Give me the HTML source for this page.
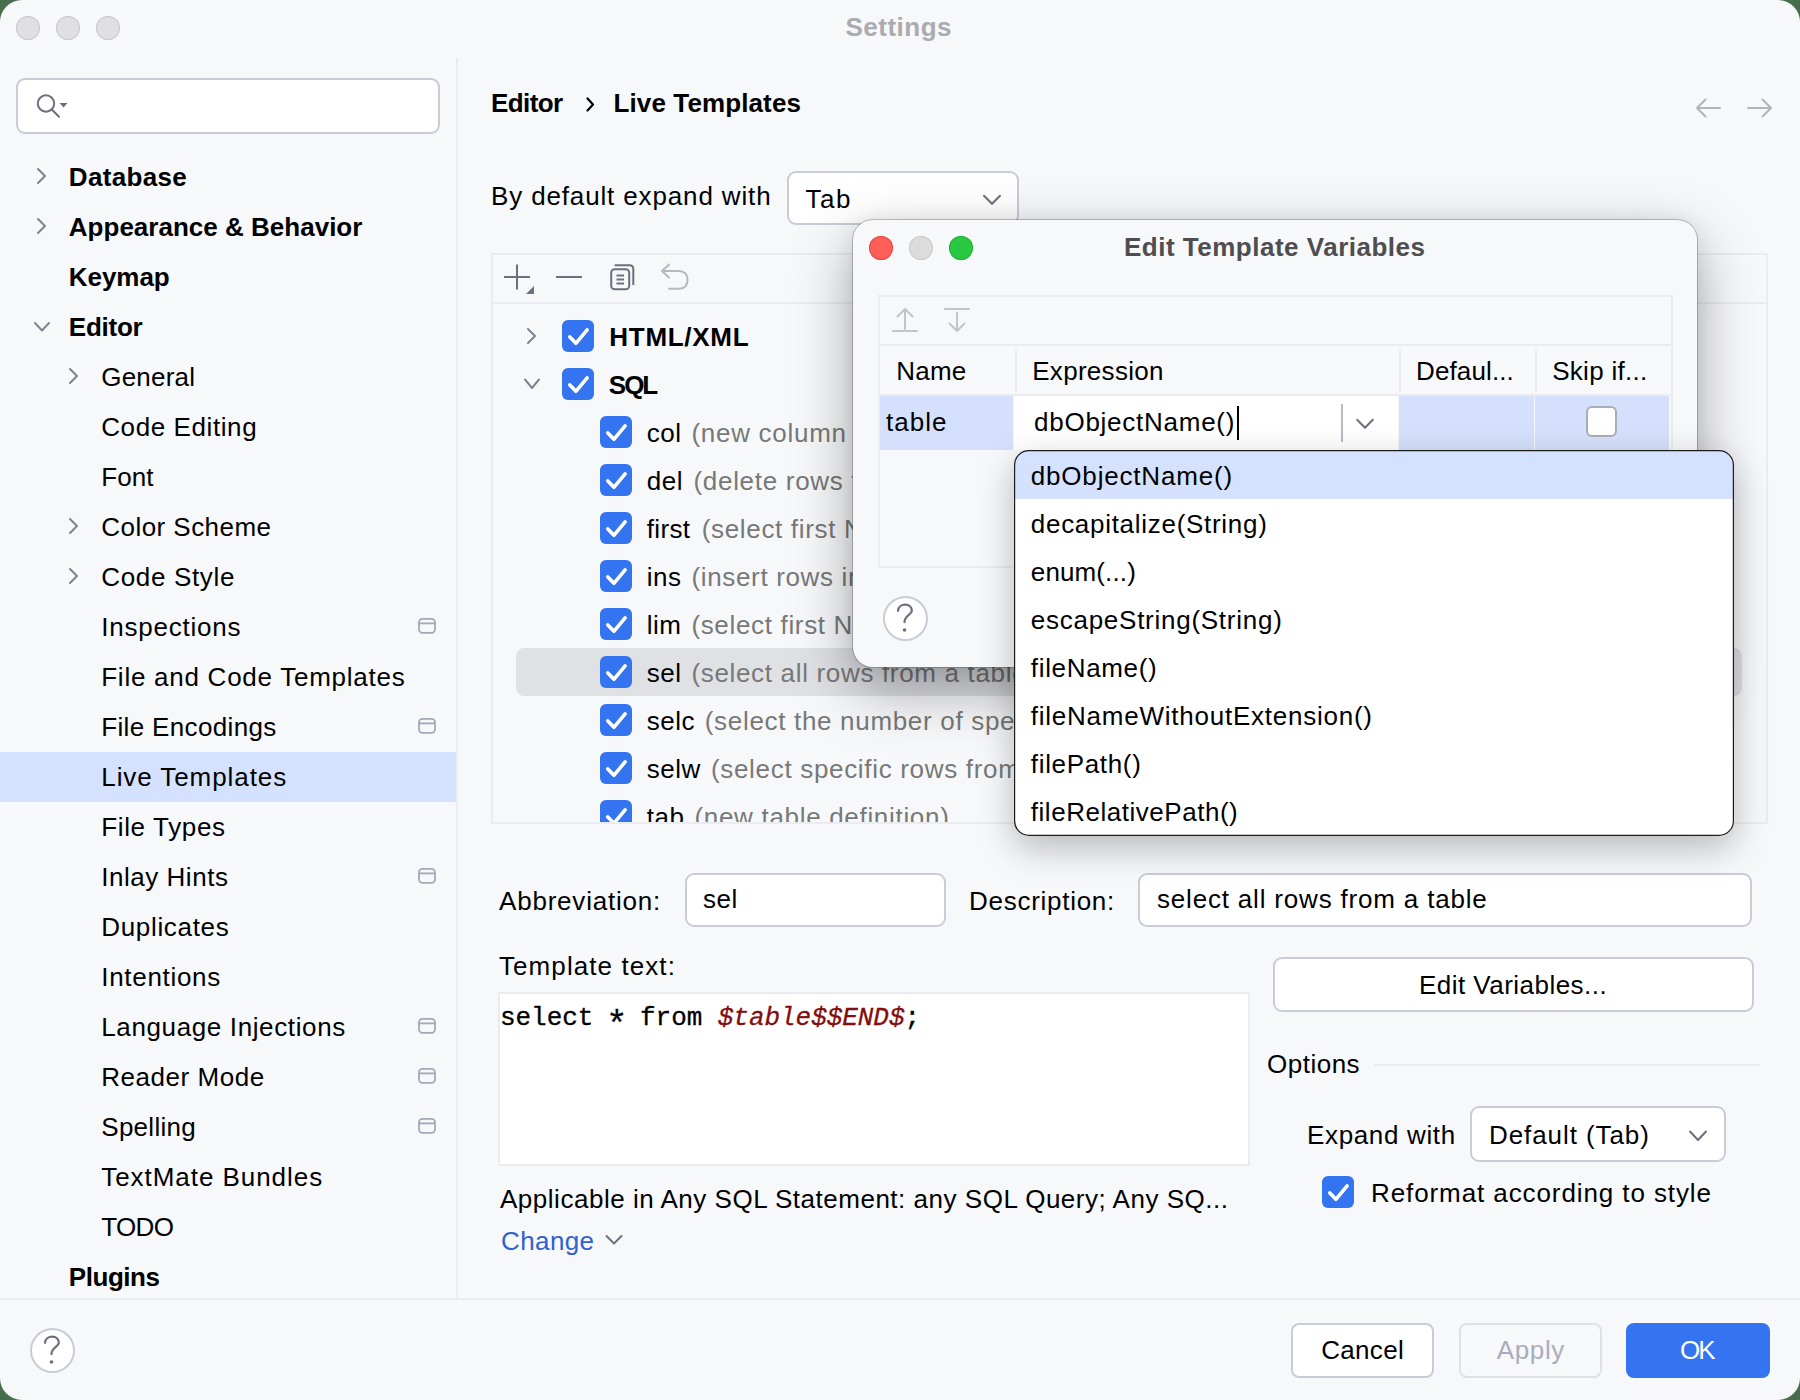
<!DOCTYPE html>
<html><head><meta charset="utf-8"><title>Settings</title>
<style>
html,body{margin:0;padding:0;}
body{width:1800px;height:1400px;background:#476e4c;overflow:hidden;position:relative;font-family:"Liberation Sans",sans-serif;}
#win{position:absolute;left:0;top:0;width:1800px;height:1400px;background:#f7f8fa;border-radius:22px;overflow:hidden;}
.t{position:absolute;white-space:nowrap;line-height:1;}
.b{position:absolute;}
svg.b{overflow:visible;}
#dlg{background:#f7f8fa;border-radius:20px;box-shadow:0 0 0 1px rgba(0,0,0,0.22),0 22px 60px rgba(0,0,0,0.34),0 0 20px rgba(0,0,0,0.07);}
#pop{background:#fff;border-radius:15px;overflow:hidden;box-shadow:0 12px 36px rgba(0,0,0,0.26);}
#popb{border-radius:15px;box-shadow:inset 0 0 0 1.2px #1c1c1c;}
</style></head><body>
<div id="win">
<div class="b" style="left:16px;top:16px;width:24px;height:24px;border-radius:50%;background:#e0e0e2;box-shadow:inset 0 0 0 1px #c8c8ca;"></div>
<div class="b" style="left:56px;top:16px;width:24px;height:24px;border-radius:50%;background:#e0e0e2;box-shadow:inset 0 0 0 1px #c8c8ca;"></div>
<div class="b" style="left:96px;top:16px;width:24px;height:24px;border-radius:50%;background:#e0e0e2;box-shadow:inset 0 0 0 1px #c8c8ca;"></div>
<div class="t" style="left:845.50px;top:13.99px;font-size:26px;font-weight:700;font-style:normal;font-family:'Liberation Sans', sans-serif;color:#aaabae;letter-spacing:0.500px;">Settings</div>
<div class="b" style="left:16px;top:78px;width:424px;height:56px;background:#fff;border:2px solid #c9ccd6;border-radius:9px;box-sizing:border-box;"></div>
<svg class="b" style="left:30px;top:90px;" width="50" height="32" viewBox="30 90 50 32"><circle cx="46" cy="103.5" r="8.2" fill="none" stroke="#6c707e" stroke-width="2"/><line x1="51.8" y1="109.5" x2="59" y2="116.8" stroke="#6c707e" stroke-width="2" stroke-linecap="round"/><path d="M59.5 103 L67.5 103 L63.5 107.5 Z" fill="#6c707e"/></svg>
<div class="b" style="left:456px;top:58px;width:2px;height:1240px;background:#ebecf0;"></div>
<div class="t" style="left:68.80px;top:163.99px;font-size:26px;font-weight:700;font-style:normal;font-family:'Liberation Sans', sans-serif;color:#000;letter-spacing:0.321px;">Database</div>
<svg class="b" style="left:33.8px;top:165px;" width="16.0" height="22" viewBox="33.8 165 16.0 22"><polyline points="37.8,169 44.8,176 37.8,183" fill="none" stroke="#7f8391" stroke-width="2" stroke-linecap="round" stroke-linejoin="round"/></svg>
<div class="t" style="left:68.80px;top:213.99px;font-size:26px;font-weight:700;font-style:normal;font-family:'Liberation Sans', sans-serif;color:#000;letter-spacing:0.013px;">Appearance &amp; Behavior</div>
<svg class="b" style="left:33.8px;top:215px;" width="16.0" height="22" viewBox="33.8 215 16.0 22"><polyline points="37.8,219 44.8,226 37.8,233" fill="none" stroke="#7f8391" stroke-width="2" stroke-linecap="round" stroke-linejoin="round"/></svg>
<div class="t" style="left:68.80px;top:263.99px;font-size:26px;font-weight:700;font-style:normal;font-family:'Liberation Sans', sans-serif;color:#000;letter-spacing:-0.050px;">Keymap</div>
<div class="t" style="left:68.80px;top:313.99px;font-size:26px;font-weight:700;font-style:normal;font-family:'Liberation Sans', sans-serif;color:#000;letter-spacing:-0.250px;">Editor</div>
<svg class="b" style="left:29.799999999999997px;top:317.5px;" width="24.0" height="18.0" viewBox="29.799999999999997 317.5 24.0 18.0"><polyline points="34.8,322.5 41.8,330.0 48.8,322.5" fill="none" stroke="#7f8391" stroke-width="2" stroke-linecap="round" stroke-linejoin="round"/></svg>
<div class="t" style="left:101.25px;top:363.99px;font-size:26px;font-weight:400;font-style:normal;font-family:'Liberation Sans', sans-serif;color:#000;letter-spacing:0.208px;">General</div>
<svg class="b" style="left:66.25px;top:365px;" width="16.0" height="22" viewBox="66.25 365 16.0 22"><polyline points="70.25,369 77.25,376 70.25,383" fill="none" stroke="#7f8391" stroke-width="2" stroke-linecap="round" stroke-linejoin="round"/></svg>
<div class="t" style="left:101.25px;top:413.99px;font-size:26px;font-weight:400;font-style:normal;font-family:'Liberation Sans', sans-serif;color:#000;letter-spacing:0.591px;">Code Editing</div>
<div class="t" style="left:101.25px;top:463.99px;font-size:26px;font-weight:400;font-style:normal;font-family:'Liberation Sans', sans-serif;color:#000;letter-spacing:0.083px;">Font</div>
<div class="t" style="left:101.25px;top:513.99px;font-size:26px;font-weight:400;font-style:normal;font-family:'Liberation Sans', sans-serif;color:#000;letter-spacing:0.455px;">Color Scheme</div>
<svg class="b" style="left:66.25px;top:515px;" width="16.0" height="22" viewBox="66.25 515 16.0 22"><polyline points="70.25,519 77.25,526 70.25,533" fill="none" stroke="#7f8391" stroke-width="2" stroke-linecap="round" stroke-linejoin="round"/></svg>
<div class="t" style="left:101.25px;top:563.99px;font-size:26px;font-weight:400;font-style:normal;font-family:'Liberation Sans', sans-serif;color:#000;letter-spacing:0.667px;">Code Style</div>
<svg class="b" style="left:66.25px;top:565px;" width="16.0" height="22" viewBox="66.25 565 16.0 22"><polyline points="70.25,569 77.25,576 70.25,583" fill="none" stroke="#7f8391" stroke-width="2" stroke-linecap="round" stroke-linejoin="round"/></svg>
<div class="t" style="left:101.25px;top:613.99px;font-size:26px;font-weight:400;font-style:normal;font-family:'Liberation Sans', sans-serif;color:#000;letter-spacing:0.775px;">Inspections</div>
<svg class="b" style="left:414px;top:614px;" width="26" height="24" viewBox="414 614 26 24"><rect x="419" y="618.8" width="16" height="14" rx="3.5" fill="none" stroke="#a3a8b8" stroke-width="1.8"/><line x1="419" y1="623.4" x2="435" y2="623.4" stroke="#a3a8b8" stroke-width="1.8"/></svg>
<div class="t" style="left:101.25px;top:663.99px;font-size:26px;font-weight:400;font-style:normal;font-family:'Liberation Sans', sans-serif;color:#000;letter-spacing:0.739px;">File and Code Templates</div>
<div class="t" style="left:101.25px;top:713.99px;font-size:26px;font-weight:400;font-style:normal;font-family:'Liberation Sans', sans-serif;color:#000;letter-spacing:0.346px;">File Encodings</div>
<svg class="b" style="left:414px;top:714px;" width="26" height="24" viewBox="414 714 26 24"><rect x="419" y="718.8" width="16" height="14" rx="3.5" fill="none" stroke="#a3a8b8" stroke-width="1.8"/><line x1="419" y1="723.4" x2="435" y2="723.4" stroke="#a3a8b8" stroke-width="1.8"/></svg>
<div class="b" style="left:0px;top:752px;width:456px;height:50px;background:#d4e2ff;"></div>
<div class="t" style="left:101.25px;top:763.99px;font-size:26px;font-weight:400;font-style:normal;font-family:'Liberation Sans', sans-serif;color:#000;letter-spacing:0.923px;">Live Templates</div>
<div class="t" style="left:101.25px;top:813.99px;font-size:26px;font-weight:400;font-style:normal;font-family:'Liberation Sans', sans-serif;color:#000;letter-spacing:0.639px;">File Types</div>
<div class="t" style="left:101.25px;top:863.99px;font-size:26px;font-weight:400;font-style:normal;font-family:'Liberation Sans', sans-serif;color:#000;letter-spacing:0.525px;">Inlay Hints</div>
<svg class="b" style="left:414px;top:864px;" width="26" height="24" viewBox="414 864 26 24"><rect x="419" y="868.8" width="16" height="14" rx="3.5" fill="none" stroke="#a3a8b8" stroke-width="1.8"/><line x1="419" y1="873.4" x2="435" y2="873.4" stroke="#a3a8b8" stroke-width="1.8"/></svg>
<div class="t" style="left:101.25px;top:913.99px;font-size:26px;font-weight:400;font-style:normal;font-family:'Liberation Sans', sans-serif;color:#000;letter-spacing:0.667px;">Duplicates</div>
<div class="t" style="left:101.25px;top:963.99px;font-size:26px;font-weight:400;font-style:normal;font-family:'Liberation Sans', sans-serif;color:#000;letter-spacing:0.694px;">Intentions</div>
<div class="t" style="left:101.25px;top:1013.99px;font-size:26px;font-weight:400;font-style:normal;font-family:'Liberation Sans', sans-serif;color:#000;letter-spacing:0.625px;">Language Injections</div>
<svg class="b" style="left:414px;top:1014px;" width="26" height="24" viewBox="414 1014 26 24"><rect x="419" y="1018.8" width="16" height="14" rx="3.5" fill="none" stroke="#a3a8b8" stroke-width="1.8"/><line x1="419" y1="1023.4" x2="435" y2="1023.4" stroke="#a3a8b8" stroke-width="1.8"/></svg>
<div class="t" style="left:101.25px;top:1063.99px;font-size:26px;font-weight:400;font-style:normal;font-family:'Liberation Sans', sans-serif;color:#000;letter-spacing:0.550px;">Reader Mode</div>
<svg class="b" style="left:414px;top:1064px;" width="26" height="24" viewBox="414 1064 26 24"><rect x="419" y="1068.8" width="16" height="14" rx="3.5" fill="none" stroke="#a3a8b8" stroke-width="1.8"/><line x1="419" y1="1073.4" x2="435" y2="1073.4" stroke="#a3a8b8" stroke-width="1.8"/></svg>
<div class="t" style="left:101.25px;top:1113.99px;font-size:26px;font-weight:400;font-style:normal;font-family:'Liberation Sans', sans-serif;color:#000;letter-spacing:0.286px;">Spelling</div>
<svg class="b" style="left:414px;top:1114px;" width="26" height="24" viewBox="414 1114 26 24"><rect x="419" y="1118.8" width="16" height="14" rx="3.5" fill="none" stroke="#a3a8b8" stroke-width="1.8"/><line x1="419" y1="1123.4" x2="435" y2="1123.4" stroke="#a3a8b8" stroke-width="1.8"/></svg>
<div class="t" style="left:101.25px;top:1163.99px;font-size:26px;font-weight:400;font-style:normal;font-family:'Liberation Sans', sans-serif;color:#000;letter-spacing:0.950px;">TextMate Bundles</div>
<div class="t" style="left:101.25px;top:1213.99px;font-size:26px;font-weight:400;font-style:normal;font-family:'Liberation Sans', sans-serif;color:#000;letter-spacing:-0.667px;">TODO</div>
<div class="t" style="left:68.80px;top:1263.99px;font-size:26px;font-weight:700;font-style:normal;font-family:'Liberation Sans', sans-serif;color:#000;letter-spacing:-0.450px;">Plugins</div>
<div class="b" style="left:0px;top:1298px;width:1800px;height:2px;background:#ebecf0;"></div>
<div class="b" style="left:29.5px;top:1327.5px;width:45.0px;height:45.0px;border-radius:50%;background:#fff;border:2px solid #c9ccd6;box-sizing:border-box;"></div>
<svg class="b" style="left:38px;top:1330px;" width="28" height="38" viewBox="38 1330 28 38"><path d="M45 1342.8 C45.5 1334.5 59.5 1334.5 58.8 1343 C58.2 1347 51.5 1347.5 51.5 1354.2" fill="none" stroke="#6c707e" stroke-width="2.2" stroke-linecap="round"/><circle cx="51.5" cy="1362" r="1.8" fill="#6c707e"/></svg>
<div class="b" style="left:1291px;top:1323px;width:143px;height:55px;background:#fff;border:2px solid #c9ccd6;border-radius:8px;box-sizing:border-box;"></div>
<div class="t" style="left:1321.25px;top:1337.49px;font-size:26px;font-weight:400;font-style:normal;font-family:'Liberation Sans', sans-serif;color:#000;letter-spacing:0.300px;">Cancel</div>
<div class="b" style="left:1459px;top:1323px;width:143px;height:55px;background:transparent;border:2px solid #dfe1e5;border-radius:8px;box-sizing:border-box;"></div>
<div class="t" style="left:1496.75px;top:1337.49px;font-size:26px;font-weight:400;font-style:normal;font-family:'Liberation Sans', sans-serif;color:#a8adbd;letter-spacing:0.625px;">Apply</div>
<div class="b" style="left:1626px;top:1323px;width:144px;height:55px;background:#3574f0;border-radius:8px;"></div>
<div class="t" style="left:1680.00px;top:1337.49px;font-size:26px;font-weight:400;font-style:normal;font-family:'Liberation Sans', sans-serif;color:#fff;letter-spacing:-2.000px;">OK</div>
<div class="t" style="left:491.00px;top:89.99px;font-size:26px;font-weight:700;font-style:normal;font-family:'Liberation Sans', sans-serif;color:#000;letter-spacing:-0.600px;">Editor</div>
<svg class="b" style="left:580px;top:92px;" width="20" height="24" viewBox="580 92 20 24"><polyline points="587.5,98.5 593,104.5 587.5,110.5" fill="none" stroke="#000" stroke-width="2.2" stroke-linecap="round" stroke-linejoin="round"/></svg>
<div class="t" style="left:613.50px;top:89.99px;font-size:26px;font-weight:700;font-style:normal;font-family:'Liberation Sans', sans-serif;color:#000;letter-spacing:0.115px;">Live Templates</div>
<svg class="b" style="left:1690px;top:94px;" width="36" height="28" viewBox="1690 94 36 28"><path d="M1720 108 L1697 108 M1705.5 99.5 L1697 108 L1705.5 116.5" fill="none" stroke="#b5b5b7" stroke-width="2" stroke-linecap="round" stroke-linejoin="round"/></svg>
<svg class="b" style="left:1742px;top:94px;" width="36" height="28" viewBox="1742 94 36 28"><path d="M1748 108 L1771 108 M1762.5 99.5 L1771 108 L1762.5 116.5" fill="none" stroke="#b5b5b7" stroke-width="2" stroke-linecap="round" stroke-linejoin="round"/></svg>
<div class="t" style="left:491.00px;top:183.49px;font-size:26px;font-weight:400;font-style:normal;font-family:'Liberation Sans', sans-serif;color:#000;letter-spacing:0.857px;">By default expand with</div>
<div class="b" style="left:787px;top:171px;width:232px;height:54px;background:#fff;border:2px solid #c9ccd6;border-radius:9px;box-sizing:border-box;"></div>
<div class="t" style="left:805.50px;top:185.69px;font-size:26px;font-weight:400;font-style:normal;font-family:'Liberation Sans', sans-serif;color:#000;letter-spacing:1.500px;">Tab</div>
<svg class="b" style="left:980px;top:191px;" width="24" height="18" viewBox="980 191 24 18"><polyline points="984,195.7 992,203.8 1000,195.7" fill="none" stroke="#6c707e" stroke-width="2" stroke-linecap="round" stroke-linejoin="round"/></svg>
<div class="b" style="left:491px;top:253px;width:1277px;height:571px;border:2px solid #ebecf0;box-sizing:border-box;"></div>
<div class="b" style="left:493px;top:302px;width:1273px;height:2px;background:#ebecf0;"></div>
<svg class="b" style="left:498px;top:258px;" width="42" height="40" viewBox="498 258 42 40"><path d="M504 277 L530 277 M517 264.5 L517 289.5" stroke="#6c707e" stroke-width="2"/><path d="M534 286 L534 294 L526 294 Z" fill="#6c707e"/></svg>
<svg class="b" style="left:550px;top:267px;" width="40" height="20" viewBox="550 267 40 20"><path d="M556 277 L582 277" stroke="#6c707e" stroke-width="2"/></svg>
<svg class="b" style="left:604px;top:258px;" width="36" height="38" viewBox="604 258 36 38"><rect x="611.2" y="269.2" width="18" height="20" rx="3.5" fill="none" stroke="#6c707e" stroke-width="2"/><path d="M614.7 265.3 L629.5 265.3 Q633.3 265.3 633.3 269 L633.3 285" fill="none" stroke="#6c707e" stroke-width="2"/><path d="M616.5 275.5 L624 275.5 M616.5 279.5 L624 279.5 M616.5 283.5 L624 283.5" stroke="#6c707e" stroke-width="1.8"/></svg>
<svg class="b" style="left:655px;top:258px;" width="40" height="38" viewBox="655 258 40 38"><path d="M662 271 L669 264.5 M662 271 L669 277.5 M662.5 271 L678.5 271 Q687.5 271 687.5 280 Q687.5 288.8 678.5 288.8 L669 288.8" fill="none" stroke="#b6b8be" stroke-width="2" stroke-linecap="round" stroke-linejoin="round"/></svg>
<div class="b" style="left:493px;top:304px;width:1273px;height:518px;overflow:hidden;">
<div class="b" style="left:-493px;top:-304px;width:1800px;height:1400px;">
<div class="b" style="left:516px;top:648px;width:1226px;height:48px;background:#dfe1e5;border-radius:8px;"></div>
<svg class="b" style="left:524px;top:325px;" width="16" height="22" viewBox="524 325 16 22"><polyline points="528,329 535,336 528,343" fill="none" stroke="#7f8391" stroke-width="2" stroke-linecap="round" stroke-linejoin="round"/></svg>
<div class="b" style="left:562px;top:320px;width:32px;height:32px;background:#3574f0;border-radius:6px;"></div>
<svg class="b" style="left:562px;top:320px;" width="32" height="32" viewBox="562 320 32 32"><polyline points="569.8,336.9 575.9,343.3 587.1,329.9" fill="none" stroke="#fff" stroke-width="3.6" stroke-linecap="round" stroke-linejoin="round"/></svg>
<div class="t" style="left:609.30px;top:323.99px;font-size:26px;font-weight:700;font-style:normal;font-family:'Liberation Sans', sans-serif;color:#000;letter-spacing:0.714px;">HTML/XML</div>
<svg class="b" style="left:520px;top:375px;" width="24" height="18" viewBox="520 375 24 18"><polyline points="525,379.5 532,388.0 539,379.5" fill="none" stroke="#7f8391" stroke-width="2" stroke-linecap="round" stroke-linejoin="round"/></svg>
<div class="b" style="left:562px;top:368px;width:32px;height:32px;background:#3574f0;border-radius:6px;"></div>
<svg class="b" style="left:562px;top:368px;" width="32" height="32" viewBox="562 368 32 32"><polyline points="569.8,384.9 575.9,391.3 587.1,377.9" fill="none" stroke="#fff" stroke-width="3.6" stroke-linecap="round" stroke-linejoin="round"/></svg>
<div class="t" style="left:608.80px;top:372.49px;font-size:26px;font-weight:700;font-style:normal;font-family:'Liberation Sans', sans-serif;color:#000;letter-spacing:-2.000px;">SQL</div>
<div class="b" style="left:600px;top:416px;width:32px;height:32px;background:#3574f0;border-radius:6px;"></div>
<svg class="b" style="left:600px;top:416px;" width="32" height="32" viewBox="600 416 32 32"><polyline points="607.8,432.9 613.9,439.3 625.1,425.9" fill="none" stroke="#fff" stroke-width="3.6" stroke-linecap="round" stroke-linejoin="round"/></svg>
<div class="t" style="left:646.80px;top:419.99px;font-size:26px;font-weight:400;font-style:normal;font-family:'Liberation Sans', sans-serif;color:#000;letter-spacing:0.495px;">col</div>
<div class="t" style="left:691.39px;top:419.99px;font-size:26px;font-weight:400;font-style:normal;font-family:'Liberation Sans', sans-serif;color:#787878;letter-spacing:0.728px;">(new column definition)</div>
<div class="b" style="left:600px;top:464px;width:32px;height:32px;background:#3574f0;border-radius:6px;"></div>
<svg class="b" style="left:600px;top:464px;" width="32" height="32" viewBox="600 464 32 32"><polyline points="607.8,480.9 613.9,487.3 625.1,473.9" fill="none" stroke="#fff" stroke-width="3.6" stroke-linecap="round" stroke-linejoin="round"/></svg>
<div class="t" style="left:646.80px;top:467.99px;font-size:26px;font-weight:400;font-style:normal;font-family:'Liberation Sans', sans-serif;color:#000;letter-spacing:0.525px;">del</div>
<div class="t" style="left:693.45px;top:467.99px;font-size:26px;font-weight:400;font-style:normal;font-family:'Liberation Sans', sans-serif;color:#787878;letter-spacing:0.708px;">(delete rows from a table)</div>
<div class="b" style="left:600px;top:512px;width:32px;height:32px;background:#3574f0;border-radius:6px;"></div>
<svg class="b" style="left:600px;top:512px;" width="32" height="32" viewBox="600 512 32 32"><polyline points="607.8,528.9 613.9,535.3 625.1,521.9" fill="none" stroke="#fff" stroke-width="3.6" stroke-linecap="round" stroke-linejoin="round"/></svg>
<div class="t" style="left:646.80px;top:515.99px;font-size:26px;font-weight:400;font-style:normal;font-family:'Liberation Sans', sans-serif;color:#000;letter-spacing:0.322px;">first</div>
<div class="t" style="left:701.69px;top:515.99px;font-size:26px;font-weight:400;font-style:normal;font-family:'Liberation Sans', sans-serif;color:#787878;letter-spacing:0.667px;">(select first N rows from a table)</div>
<div class="b" style="left:600px;top:560px;width:32px;height:32px;background:#3574f0;border-radius:6px;"></div>
<svg class="b" style="left:600px;top:560px;" width="32" height="32" viewBox="600 560 32 32"><polyline points="607.8,576.9 613.9,583.3 625.1,569.9" fill="none" stroke="#fff" stroke-width="3.6" stroke-linecap="round" stroke-linejoin="round"/></svg>
<div class="t" style="left:646.80px;top:563.99px;font-size:26px;font-weight:400;font-style:normal;font-family:'Liberation Sans', sans-serif;color:#000;letter-spacing:0.495px;">ins</div>
<div class="t" style="left:691.39px;top:563.99px;font-size:26px;font-weight:400;font-style:normal;font-family:'Liberation Sans', sans-serif;color:#787878;letter-spacing:0.665px;">(insert rows into a table)</div>
<div class="b" style="left:600px;top:608px;width:32px;height:32px;background:#3574f0;border-radius:6px;"></div>
<svg class="b" style="left:600px;top:608px;" width="32" height="32" viewBox="600 608 32 32"><polyline points="607.8,624.9 613.9,631.3 625.1,617.9" fill="none" stroke="#fff" stroke-width="3.6" stroke-linecap="round" stroke-linejoin="round"/></svg>
<div class="t" style="left:646.80px;top:611.99px;font-size:26px;font-weight:400;font-style:normal;font-family:'Liberation Sans', sans-serif;color:#000;letter-spacing:0.495px;">lim</div>
<div class="t" style="left:691.39px;top:611.99px;font-size:26px;font-weight:400;font-style:normal;font-family:'Liberation Sans', sans-serif;color:#787878;letter-spacing:0.667px;">(select first N rows from a table)</div>
<div class="b" style="left:600px;top:656px;width:32px;height:32px;background:#3574f0;border-radius:6px;"></div>
<svg class="b" style="left:600px;top:656px;" width="32" height="32" viewBox="600 656 32 32"><polyline points="607.8,672.9 613.9,679.3 625.1,665.9" fill="none" stroke="#fff" stroke-width="3.6" stroke-linecap="round" stroke-linejoin="round"/></svg>
<div class="t" style="left:646.80px;top:659.99px;font-size:26px;font-weight:400;font-style:normal;font-family:'Liberation Sans', sans-serif;color:#000;letter-spacing:0.495px;">sel</div>
<div class="t" style="left:691.39px;top:659.99px;font-size:26px;font-weight:400;font-style:normal;font-family:'Liberation Sans', sans-serif;color:#787878;letter-spacing:0.672px;">(select all rows from a table)</div>
<div class="b" style="left:600px;top:704px;width:32px;height:32px;background:#3574f0;border-radius:6px;"></div>
<svg class="b" style="left:600px;top:704px;" width="32" height="32" viewBox="600 704 32 32"><polyline points="607.8,720.9 613.9,727.3 625.1,713.9" fill="none" stroke="#fff" stroke-width="3.6" stroke-linecap="round" stroke-linejoin="round"/></svg>
<div class="t" style="left:646.80px;top:707.99px;font-size:26px;font-weight:400;font-style:normal;font-family:'Liberation Sans', sans-serif;color:#000;letter-spacing:0.460px;">selc</div>
<div class="t" style="left:704.78px;top:707.99px;font-size:26px;font-weight:400;font-style:normal;font-family:'Liberation Sans', sans-serif;color:#787878;letter-spacing:0.681px;">(select the number of specific rows in a table)</div>
<div class="b" style="left:600px;top:752px;width:32px;height:32px;background:#3574f0;border-radius:6px;"></div>
<svg class="b" style="left:600px;top:752px;" width="32" height="32" viewBox="600 752 32 32"><polyline points="607.8,768.9 613.9,775.3 625.1,761.9" fill="none" stroke="#fff" stroke-width="3.6" stroke-linecap="round" stroke-linejoin="round"/></svg>
<div class="t" style="left:646.80px;top:755.99px;font-size:26px;font-weight:400;font-style:normal;font-family:'Liberation Sans', sans-serif;color:#000;letter-spacing:0.520px;">selw</div>
<div class="t" style="left:710.96px;top:755.99px;font-size:26px;font-weight:400;font-style:normal;font-family:'Liberation Sans', sans-serif;color:#787878;letter-spacing:0.681px;">(select specific rows from a table)</div>
<div class="b" style="left:600px;top:800px;width:32px;height:32px;background:#3574f0;border-radius:6px;"></div>
<svg class="b" style="left:600px;top:800px;" width="32" height="32" viewBox="600 800 32 32"><polyline points="607.8,816.9 613.9,823.3 625.1,809.9" fill="none" stroke="#fff" stroke-width="3.6" stroke-linecap="round" stroke-linejoin="round"/></svg>
<div class="t" style="left:646.80px;top:803.99px;font-size:26px;font-weight:400;font-style:normal;font-family:'Liberation Sans', sans-serif;color:#000;letter-spacing:0.540px;">tab</div>
<div class="t" style="left:694.48px;top:803.99px;font-size:26px;font-weight:400;font-style:normal;font-family:'Liberation Sans', sans-serif;color:#787878;letter-spacing:0.686px;">(new table definition)</div>
</div></div>
<div class="t" style="left:499.00px;top:887.99px;font-size:26px;font-weight:400;font-style:normal;font-family:'Liberation Sans', sans-serif;color:#000;letter-spacing:0.792px;">Abbreviation:</div>
<div class="b" style="left:685px;top:873px;width:261px;height:54px;background:#fff;border:2px solid #c9ccd6;border-radius:9px;box-sizing:border-box;"></div>
<div class="t" style="left:703.00px;top:885.99px;font-size:26px;font-weight:400;font-style:normal;font-family:'Liberation Sans', sans-serif;color:#000;letter-spacing:0.500px;">sel</div>
<div class="t" style="left:969.00px;top:887.99px;font-size:26px;font-weight:400;font-style:normal;font-family:'Liberation Sans', sans-serif;color:#000;letter-spacing:0.727px;">Description:</div>
<div class="b" style="left:1138px;top:873px;width:614px;height:54px;background:#fff;border:2px solid #c9ccd6;border-radius:9px;box-sizing:border-box;"></div>
<div class="t" style="left:1157.00px;top:885.99px;font-size:26px;font-weight:400;font-style:normal;font-family:'Liberation Sans', sans-serif;color:#000;letter-spacing:0.815px;">select all rows from a table</div>
<div class="t" style="left:499.00px;top:953.29px;font-size:26px;font-weight:400;font-style:normal;font-family:'Liberation Sans', sans-serif;color:#000;letter-spacing:1.077px;">Template text:</div>
<div class="b" style="left:498px;top:992px;width:752px;height:174px;background:#fff;border:2px solid #ebecf0;box-sizing:border-box;"></div>
<div class="t" style="left:500px;top:1005.48px;font-family:'Liberation Mono',monospace;font-size:26px;letter-spacing:-0.05px;color:#000;-webkit-text-stroke:0.3px #000;">select <span style="position:relative;top:11px;left:-3px;font-size:36px;line-height:0;letter-spacing:-6px;">*</span> from <span style="font-style:italic;color:#850d0d;-webkit-text-stroke:0.3px #850d0d;">$table$$END$</span>;</div>
<div class="t" style="left:500.00px;top:1185.99px;font-size:26px;font-weight:400;font-style:normal;font-family:'Liberation Sans', sans-serif;color:#000;letter-spacing:0.518px;">Applicable in Any SQL Statement: any SQL Query; Any SQ...</div>
<div class="t" style="left:501.00px;top:1227.99px;font-size:26px;font-weight:400;font-style:normal;font-family:'Liberation Sans', sans-serif;color:#2f62cf;letter-spacing:0.400px;">Change</div>
<svg class="b" style="left:602px;top:1231px;" width="24" height="18" viewBox="602 1231 24 18"><polyline points="606.5,1236 614,1243.5 621.5,1236" fill="none" stroke="#6c707e" stroke-width="2" stroke-linecap="round" stroke-linejoin="round"/></svg>
<div class="b" style="left:1273px;top:957px;width:481px;height:55px;background:#fff;border:2px solid #c9ccd6;border-radius:9px;box-sizing:border-box;"></div>
<div class="t" style="left:1419.00px;top:971.99px;font-size:26px;font-weight:400;font-style:normal;font-family:'Liberation Sans', sans-serif;color:#000;letter-spacing:0.469px;">Edit Variables...</div>
<div class="t" style="left:1267.00px;top:1051.49px;font-size:26px;font-weight:400;font-style:normal;font-family:'Liberation Sans', sans-serif;color:#000;letter-spacing:0.500px;">Options</div>
<div class="b" style="left:1374px;top:1064px;width:386px;height:2px;background:#ebecf0;"></div>
<div class="t" style="left:1307.00px;top:1121.99px;font-size:26px;font-weight:400;font-style:normal;font-family:'Liberation Sans', sans-serif;color:#000;letter-spacing:0.650px;">Expand with</div>
<div class="b" style="left:1470px;top:1106px;width:256px;height:56px;background:#fff;border:2px solid #c9ccd6;border-radius:9px;box-sizing:border-box;"></div>
<div class="t" style="left:1489.00px;top:1121.99px;font-size:26px;font-weight:400;font-style:normal;font-family:'Liberation Sans', sans-serif;color:#000;letter-spacing:0.917px;">Default (Tab)</div>
<svg class="b" style="left:1686px;top:1127px;" width="24" height="18" viewBox="1686 1127 24 18"><polyline points="1690,1131.5 1698,1140.0 1706,1131.5" fill="none" stroke="#6c707e" stroke-width="2" stroke-linecap="round" stroke-linejoin="round"/></svg>
<div class="b" style="left:1322px;top:1176px;width:32px;height:32px;background:#3574f0;border-radius:6px;"></div>
<svg class="b" style="left:1322px;top:1176px;" width="32" height="32" viewBox="1322 1176 32 32"><polyline points="1329.8,1192.9 1335.9,1199.3 1347.1,1185.9" fill="none" stroke="#fff" stroke-width="3.6" stroke-linecap="round" stroke-linejoin="round"/></svg>
<div class="t" style="left:1371.00px;top:1180.49px;font-size:26px;font-weight:400;font-style:normal;font-family:'Liberation Sans', sans-serif;color:#000;letter-spacing:0.904px;">Reformat according to style</div>
<div class="b" id="dlg" style="left:853px;top:220px;width:844px;height:447px;"></div>
<div class="b" style="left:869px;top:236px;width:24px;height:24px;border-radius:50%;background:#ff5f57;box-shadow:inset 0 0 0 1px #e2463f;"></div>
<div class="b" style="left:909px;top:236px;width:24px;height:24px;border-radius:50%;background:#dcdcdc;box-shadow:inset 0 0 0 1px #c8c8c8;"></div>
<div class="b" style="left:949px;top:236px;width:24px;height:24px;border-radius:50%;background:#28c840;box-shadow:inset 0 0 0 1px #1eb032;"></div>
<div class="t" style="left:1124.00px;top:234.49px;font-size:26px;font-weight:700;font-style:normal;font-family:'Liberation Sans', sans-serif;color:#4e4e50;letter-spacing:0.500px;">Edit Template Variables</div>
<div class="b" style="left:878px;top:295px;width:795px;height:273px;border:2px solid #ebecf0;box-sizing:border-box;"></div>
<div class="b" style="left:880px;top:343.5px;width:791px;height:2.0px;background:#ebecf0;"></div>
<svg class="b" style="left:888px;top:302px;" width="88" height="36" viewBox="888 302 88 36"><path d="M893 331 L917 331 M905 309 L905 329 M897.5 316.5 L905 309 L912.5 316.5" fill="none" stroke="#c2c4ca" stroke-width="2" stroke-linecap="round" stroke-linejoin="round"/><path d="M945 309 L969 309 M957 313 L957 331 M949.5 323.5 L957 331 L964.5 323.5" fill="none" stroke="#c2c4ca" stroke-width="2" stroke-linecap="round" stroke-linejoin="round"/></svg>
<div class="b" style="left:1015px;top:348px;width:2px;height:44px;background:#ebecf0;"></div>
<div class="b" style="left:1399px;top:348px;width:2px;height:44px;background:#ebecf0;"></div>
<div class="b" style="left:1535px;top:348px;width:2px;height:44px;background:#ebecf0;"></div>
<div class="b" style="left:880px;top:394px;width:791px;height:2px;background:#ebecf0;"></div>
<div class="t" style="left:896.30px;top:357.59px;font-size:26px;font-weight:400;font-style:normal;font-family:'Liberation Sans', sans-serif;color:#000;letter-spacing:0.200px;">Name</div>
<div class="t" style="left:1032.20px;top:357.99px;font-size:26px;font-weight:400;font-style:normal;font-family:'Liberation Sans', sans-serif;color:#000;letter-spacing:0.300px;">Expression</div>
<div class="t" style="left:1416.00px;top:357.99px;font-size:26px;font-weight:400;font-style:normal;font-family:'Liberation Sans', sans-serif;color:#000;letter-spacing:0.125px;">Defaul...</div>
<div class="t" style="left:1552.20px;top:357.99px;font-size:26px;font-weight:400;font-style:normal;font-family:'Liberation Sans', sans-serif;color:#000;letter-spacing:0.278px;">Skip if...</div>
<div class="b" style="left:880px;top:396px;width:133px;height:54px;background:#d5e1fc;"></div>
<div class="b" style="left:1014px;top:396px;width:384px;height:54px;background:#fff;"></div>
<div class="b" style="left:1399px;top:396px;width:135px;height:54px;background:#d5e1fc;"></div>
<div class="b" style="left:1535px;top:396px;width:134px;height:54px;background:#d5e1fc;"></div>
<div class="t" style="left:886.00px;top:409.39px;font-size:26px;font-weight:400;font-style:normal;font-family:'Liberation Sans', sans-serif;color:#000;letter-spacing:1.000px;">table</div>
<div class="t" style="left:1034.00px;top:409.39px;font-size:26px;font-weight:400;font-style:normal;font-family:'Liberation Sans', sans-serif;color:#000;letter-spacing:0.746px;">dbObjectName()</div>
<div class="b" style="left:1237px;top:406px;width:2px;height:34px;background:#000;"></div>
<div class="b" style="left:1341px;top:404px;width:2px;height:38px;background:#b8bbc6;"></div>
<svg class="b" style="left:1353px;top:415px;" width="24" height="18" viewBox="1353 415 24 18"><polyline points="1357.2,419.8 1365,427.7 1372.8,419.8" fill="none" stroke="#6c707e" stroke-width="2" stroke-linecap="round" stroke-linejoin="round"/></svg>
<div class="b" style="left:1586px;top:406px;width:31px;height:31px;background:#fff;border:2px solid #a9adb6;border-radius:6px;box-sizing:border-box;"></div>
<div class="b" style="left:882.5px;top:595.5px;width:45.0px;height:45.0px;border-radius:50%;background:#fff;border:2px solid #c9ccd6;box-sizing:border-box;"></div>
<svg class="b" style="left:891px;top:598px;" width="28" height="38" viewBox="891 598 28 38"><path d="M898 610.8 C898.5 602.5 912.5 602.5 911.8 611 C911.2 615 904.5 615.5 904.5 622.2" fill="none" stroke="#6c707e" stroke-width="2.2" stroke-linecap="round"/><circle cx="904.5" cy="630" r="1.8" fill="#6c707e"/></svg>
<div class="b" id="pop" style="left:1013.5px;top:450px;width:720px;height:386px;">
<div class="b" style="left:0;top:0;width:720px;height:48.5px;background:#d4e2ff;"></div>
</div>
<div class="t" style="left:1030.80px;top:462.79px;font-size:26px;font-weight:400;font-style:normal;font-family:'Liberation Sans', sans-serif;color:#000;letter-spacing:0.808px;">dbObjectName()</div>
<div class="t" style="left:1030.80px;top:510.79px;font-size:26px;font-weight:400;font-style:normal;font-family:'Liberation Sans', sans-serif;color:#000;letter-spacing:0.711px;">decapitalize(String)</div>
<div class="t" style="left:1030.80px;top:558.79px;font-size:26px;font-weight:400;font-style:normal;font-family:'Liberation Sans', sans-serif;color:#000;letter-spacing:0.125px;">enum(...)</div>
<div class="t" style="left:1030.80px;top:606.79px;font-size:26px;font-weight:400;font-style:normal;font-family:'Liberation Sans', sans-serif;color:#000;letter-spacing:0.737px;">escapeString(String)</div>
<div class="t" style="left:1030.80px;top:654.79px;font-size:26px;font-weight:400;font-style:normal;font-family:'Liberation Sans', sans-serif;color:#000;letter-spacing:0.667px;">fileName()</div>
<div class="t" style="left:1030.80px;top:702.79px;font-size:26px;font-weight:400;font-style:normal;font-family:'Liberation Sans', sans-serif;color:#000;letter-spacing:0.760px;">fileNameWithoutExtension()</div>
<div class="t" style="left:1030.80px;top:750.79px;font-size:26px;font-weight:400;font-style:normal;font-family:'Liberation Sans', sans-serif;color:#000;letter-spacing:0.667px;">filePath()</div>
<div class="t" style="left:1030.80px;top:798.79px;font-size:26px;font-weight:400;font-style:normal;font-family:'Liberation Sans', sans-serif;color:#000;letter-spacing:0.529px;">fileRelativePath()</div>
<div class="b" id="popb" style="left:1013.5px;top:450px;width:720px;height:386px;"></div>
</div>
</body></html>
